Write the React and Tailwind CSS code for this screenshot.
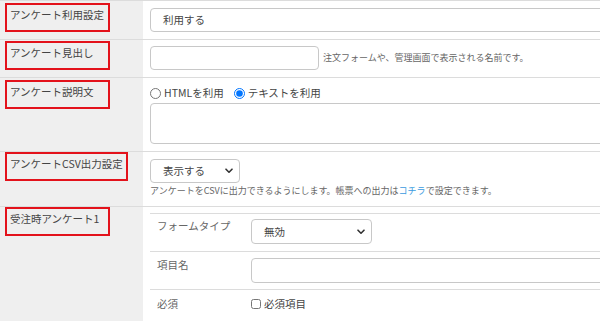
import React from "react";

function Chevron() {
  return (
    <svg width="8" height="6" viewBox="0 0 8 6" className="pointer-events-none absolute right-[6px] top-1/2 -translate-y-1/2">
      <path d="M1 1.2l3 3 3-3" fill="none" stroke="#333" strokeWidth="1.6" strokeLinecap="round" strokeLinejoin="round" />
    </svg>
  );
}

function Label({ text, wide, rowClass }) {
  return (
    <div className={`w-[143px] shrink-0 bg-[#efefef] pl-[5px] ${rowClass}`}>
      <div
        className={`border-2 border-[#e3121b] h-[29px] pl-[3px] pt-[3px] leading-[14px] text-[10.5px] text-[#444] whitespace-nowrap ${
          wide ? "w-[123px]" : "w-[105px]"
        }`}
      >
        {text}
      </div>
    </div>
  );
}

export default function App() {
  return (
    <div className="w-[600px] h-[321px] overflow-hidden bg-white font-['Noto_Sans_CJK_JP',sans-serif] text-[#444]">
      <div className="w-[700px] border-t border-[#dcdcdc]">
        {/* row 1 */}
        <div className="flex h-[39px] border-b border-[#dcdcdc]">
          <Label text="アンケート利用設定" rowClass="pt-[2px]" />
          <div className="pl-[7px] pt-[7px]">
            <div className="w-[480px] h-[24px] border border-[#c8c8c8] rounded-[4px] pl-[12px] flex items-center text-[10.5px]">
              利用する
            </div>
          </div>
        </div>

        {/* row 2 */}
        <div className="flex h-[38px] border-b border-[#dcdcdc]">
          <Label text="アンケート見出し" rowClass="pt-[1px]" />
          <div className="pl-[7px] pt-[6px] flex items-start">
            <input
              type="text"
              className="w-[169px] h-[24px] border border-[#c8c8c8] rounded-[4px] bg-white outline-none"
            />
            <span className="ml-[4px] mt-[5px] text-[9px] leading-[14px] text-[#666] whitespace-nowrap">
              注文フォームや、管理画面で表示される名前です。
            </span>
          </div>
        </div>

        {/* row 3 */}
        <div className="flex h-[74px] border-b border-[#dcdcdc]">
          <Label text="アンケート説明文" rowClass="pt-[2px]" />
          <div className="pl-[7px] pt-[8px] flex flex-col">
            <div className="flex items-center h-[14px] text-[10.5px] text-[#444]">
              <label className="flex items-center gap-[3px]">
                <input type="radio" name="desc" className="m-0 w-[11px] h-[11px]" />
                <span>HTMLを利用</span>
              </label>
              <label className="flex items-center gap-[3px] ml-[10px]">
                <input type="radio" name="desc" defaultChecked className="m-0 w-[11px] h-[11px]" />
                <span>テキストを利用</span>
              </label>
            </div>
            <textarea className="mt-[3px] w-[480px] h-[41px] border border-[#c8c8c8] rounded-[4px] resize-none outline-none" />
          </div>
        </div>

        {/* row 4 */}
        <div className="flex h-[55px] border-b border-[#dcdcdc]">
          <Label text="アンケートCSV出力設定" wide rowClass="pt-0" />
          <div className="pl-[7px] pt-[7px] flex flex-col">
            <div className="relative w-[90px] h-[24px] border border-[#c8c8c8] rounded-[4px] pl-[12px] flex items-center text-[10.5px]">
              表示する
              <Chevron />
            </div>
            <div className="mt-[2px] text-[9px] leading-[12px] text-[#666] whitespace-nowrap">
              アンケートをCSVに出力できるようにします。帳票への出力は
              <span className="text-[#3b9be0]">コチラ</span>で設定できます。
            </div>
          </div>
        </div>

        {/* row 5 */}
        <div className="flex h-[140px]">
          <Label text="受注時アンケート1" rowClass="pt-0" />
          <div className="pl-[7px] pt-[6px] flex-1">
            <div className="border-t border-[#dcdcdc] text-[10.5px] leading-[14px] text-[#666]">
              <div className="flex h-[38px] border-b border-[#dcdcdc]">
                <div className="w-[101px] shrink-0 pl-[7px] pt-[5px]">フォームタイプ</div>
                <div className="pt-[5px]">
                  <div className="relative w-[121px] h-[25px] border border-[#c8c8c8] rounded-[4px] pl-[12px] flex items-center text-[#444]">
                    無効
                    <Chevron />
                  </div>
                </div>
              </div>
              <div className="flex h-[38px] border-b border-[#dcdcdc]">
                <div className="w-[101px] shrink-0 pl-[7px] pt-[6px]">項目名</div>
                <div className="pt-[6px]">
                  <input
                    type="text"
                    className="w-[400px] h-[25px] border border-[#c8c8c8] rounded-[4px] bg-white outline-none"
                  />
                </div>
              </div>
              <div className="flex h-[32px]">
                <div className="w-[101px] shrink-0 pl-[7px] pt-[7px]">必須</div>
                <label className="flex items-center h-[28px] gap-[3px] text-[#444] self-start">
                  <input type="checkbox" className="m-0 w-[10px] h-[10px]" />
                  <span>必須項目</span>
                </label>
              </div>
            </div>
          </div>
        </div>
      </div>
    </div>
  );
}
